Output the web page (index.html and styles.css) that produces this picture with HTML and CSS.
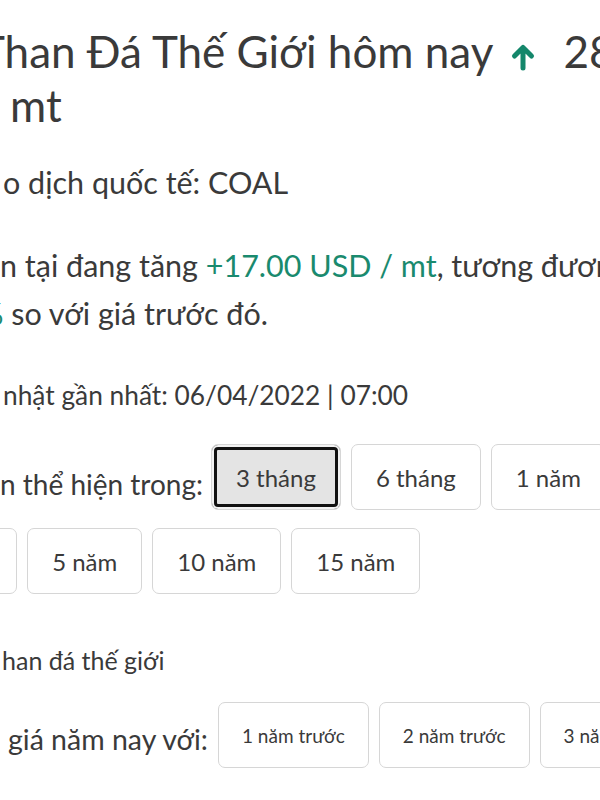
FILE: index.html
```html
<!DOCTYPE html>
<html lang="vi">

<head>
    <meta charset="UTF-8">
    <meta name="viewport" content="width=device-width, initial-scale=1.0">
    <title>Giá Than Đá Thế Giới hôm nay</title>
    <link rel="stylesheet" href="styles.css">
</head>

<body>
    <div class="page">
        <h1 class="title">
            <span class="title-line first">Than Đá Thế Giới hôm nay<svg class="arrow-up" viewBox="0 0 28 28" width="28" height="28">
                    <path d="M14 25 V5 M5.5 13 L14 4.5 L22.5 13" fill="none" stroke="#14876b" stroke-width="5" stroke-linecap="round" stroke-linejoin="round"/>
                </svg><span class="price">283.00 USD</span>
            </span>
            <span class="title-line second">mt</span>
        </h1>

        <p class="exchange">o dịch quốc tế: COAL</p>

        <p class="change">
            <span class="change-line">n tại đang tăng <span class="up">+17.00 USD / mt</span>, tương đương</span>
            <span class="change-line"><span class="up cut-pct">%</span> so với giá trước đó.</span>
        </p>

        <p class="updated">nhật gần nhất: 06/04/2022 | 07:00</p>

        <!-- chọn khoảng thời gian -->
        <div class="range-row">
            <span class="range-label">n thể hiện trong:</span>
            <button class="range-btn active">3 tháng</button>
            <button class="range-btn">6 tháng</button>
            <button class="range-btn">1 năm</button>
        </div>
        <div class="range-row second-row">
            <button class="range-btn cut-btn">3 năm</button>
            <button class="range-btn">5 năm</button>
            <button class="range-btn">10 năm</button>
            <button class="range-btn">15 năm</button>
        </div>

        <h2 class="section">han đá thế giới</h2>

        <div class="range-row compare-row">
            <span class="compare-label">giá năm nay với:</span>
            <button class="range-btn small">1 năm trước</button>
            <button class="range-btn small">2 năm trước</button>
            <button class="range-btn small">3 năm trước</button>
        </div>
    </div>
</body>

</html>
```

FILE: styles.css
```css
/* Global */
body {
    margin: 0;
    padding: 0;
    background-color: #fff;
    color: #3a3a3a;
    font-family: Lato, "Noto Sans", sans-serif;
}

.page {
    width: 600px;
    height: 800px;
    overflow: hidden;
}

/* Title */
.title {
    margin: 24px 0 0 0;
    font-size: 44px;
    font-weight: 400;
    line-height: 54px;
    white-space: nowrap;
}

.title-line {
    display: block;
}

.title-line.first {
    margin-left: -21px;
}

.title-line.second {
    margin-left: 10px;
}

.arrow-up {
    vertical-align: -3px;
    margin: 0 26px 0 16px;
}

/* Text blocks */
.exchange {
    margin: 30px 0 0 3px;
    font-size: 30.5px;
    line-height: 40px;
    white-space: nowrap;
}

.change {
    margin: 39px 0 0 0;
    font-size: 30.5px;
    line-height: 48px;
    white-space: nowrap;
}

.change-line {
    display: block;
}

.up {
    color: #1a8a6e;
}

.cut-pct {
    margin-left: -21px;
}

.updated {
    margin: 40px 0 0 3px;
    font-size: 26.3px;
    line-height: 36px;
    white-space: nowrap;
}

/* Buttons */
.range-row {
    display: flex;
    align-items: center;
    gap: 10px;
    margin-top: 31px;
    white-space: nowrap;
}

.range-row.second-row {
    margin-top: 18px;
}

.range-label {
    font-size: 28px;
    margin-top: 14px;
    margin-right: -2px;
}

.range-btn {
    flex-shrink: 0;
    height: 66px;
    padding: 0 24px;
    background-color: #fff;
    border: 1px solid #d6d6d6;
    border-radius: 7px;
    color: #3a3a3a;
    font-family: Lato, "Noto Sans", sans-serif;
    font-size: 24px;
    cursor: pointer;
}

.range-btn.active {
    background-color: #e4e4e4;
    box-shadow: inset 0 0 0 2px #f2f2f2, inset 0 0 0 5px #111;
}

.range-btn.cut-btn {
    margin-left: -98px;
}

.range-btn.small {
    font-size: 19px;
    padding: 0 23px;
}

.section {
    margin: 49px 0 0 2px;
    font-size: 25px;
    font-weight: 400;
    line-height: 34px;
}

.compare-row {
    margin-top: 25px;
    margin-left: 8px;
}

.compare-label {
    font-size: 28.5px;
    margin-top: 8px;
}
```
